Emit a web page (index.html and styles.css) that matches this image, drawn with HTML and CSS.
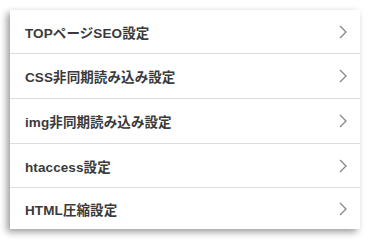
FILE: index.html
```html
<!DOCTYPE html>
<html lang="ja">
<head>
<meta charset="utf-8">
<link rel="stylesheet" href="styles.css">
</head>
<body>
<ul class="menu">
  <li class="item"><span class="label">TOPページSEO設定</span><svg class="chev" viewBox="0 0 10 16"><path d="M2 2 L8 8 L2 14" /></svg></li>
  <li class="item"><span class="label">CSS非同期読み込み設定</span><svg class="chev" viewBox="0 0 10 16"><path d="M2 2 L8 8 L2 14" /></svg></li>
  <li class="item"><span class="label">img非同期読み込み設定</span><svg class="chev" viewBox="0 0 10 16"><path d="M2 2 L8 8 L2 14" /></svg></li>
  <li class="item"><span class="label">htaccess設定</span><svg class="chev" viewBox="0 0 10 16"><path d="M2 2 L8 8 L2 14" /></svg></li>
  <li class="item"><span class="label">HTML圧縮設定</span><svg class="chev" viewBox="0 0 10 16"><path d="M2 2 L8 8 L2 14" /></svg></li>
</ul>
</body>
</html>
```
FILE: styles.css
```css
html, body {
  margin: 0;
  padding: 0;
  background: #ffffff;
}
body {
  padding: 10px;
  font-family: "Liberation Sans", "Noto Sans CJK JP", sans-serif;
}
.menu {
  list-style: none;
  margin: 0;
  padding: 0;
  width: 350px;
  background: #fff;
  box-shadow: -3px 3px 7px rgba(0, 0, 0, 0.4);
}
.item {
  display: flex;
  align-items: center;
  justify-content: space-between;
  height: 44px;
  padding: 0 12px 0 15px;
  border-bottom: 1px solid #dedede;
}
.item:first-child {
  height: 43px;
}
.item:nth-child(4) {
  height: 43px;
}
.item:last-child {
  border-bottom: none;
  height: 41px;
}
.label {
  font-size: 13.5px;
  font-weight: 600;
  color: #3a3a3a;
  letter-spacing: 0.1px;
}
.chev {
  width: 10px;
  height: 16px;
  fill: none;
  stroke: #8a8a8a;
  stroke-width: 1.4;
}
```
